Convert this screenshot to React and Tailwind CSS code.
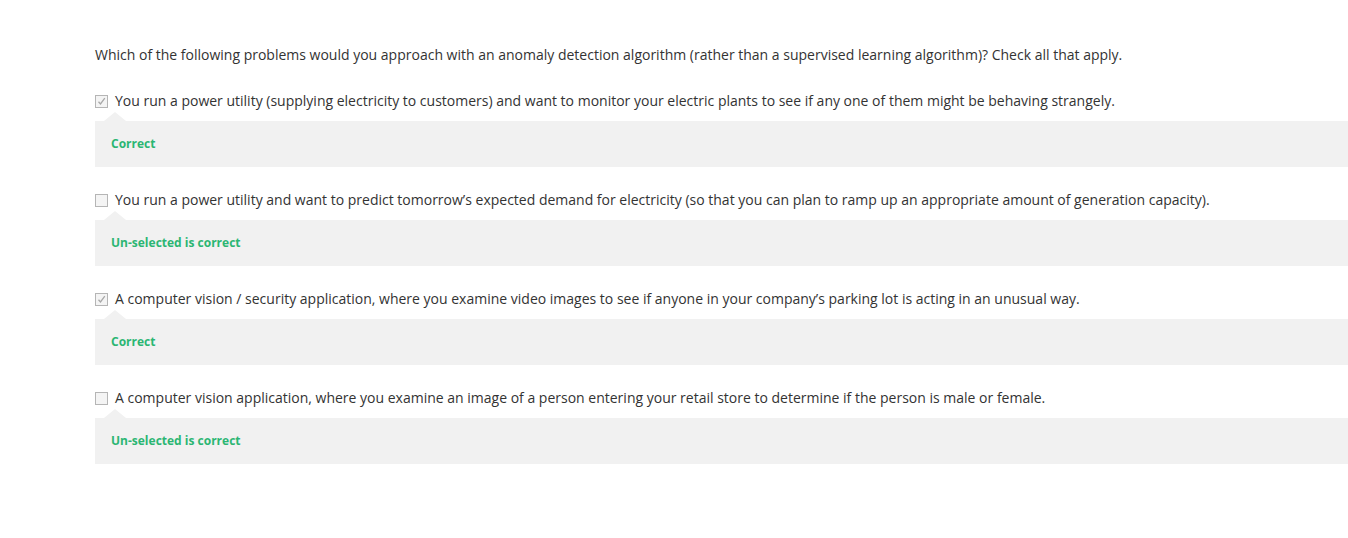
import React from "react";

const options = [
  {
    text: "You run a power utility (supplying electricity to customers) and want to monitor your electric plants to see if any one of them might be behaving strangely.",
    checked: true,
    feedback: "Correct",
  },
  {
    text: "You run a power utility and want to predict tomorrow’s expected demand for electricity (so that you can plan to ramp up an appropriate amount of generation capacity).",
    checked: false,
    feedback: "Un-selected is correct",
  },
  {
    text: "A computer vision / security application, where you examine video images to see if anyone in your company’s parking lot is acting in an unusual way.",
    checked: true,
    feedback: "Correct",
  },
  {
    text: "A computer vision application, where you examine an image of a person entering your retail store to determine if the person is male or female.",
    checked: false,
    feedback: "Un-selected is correct",
  },
];

const Checkbox = ({ checked }) => (
  <span className="w-[13px] h-[13px] border border-[#b5b5b5] bg-[#f4f4f4] flex items-center justify-center shrink-0">
    {checked && (
      <svg width="9" height="9" viewBox="0 0 9 9">
        <path d="M1.5 4.8 L3.5 7 L7.8 1.2" stroke="#a8a8a8" strokeWidth="1.3" fill="none" />
      </svg>
    )}
  </span>
);

export default function App() {
  return (
    <div
      className="bg-white min-h-[538px] pl-[95px] pt-[45px] text-[#333] text-[14px]"
      style={{ fontFamily: "'Open Sans', sans-serif" }}
    >
      <p className="leading-[20px]">
        Which of the following problems would you approach with an anomaly detection algorithm (rather than a supervised learning algorithm)? Check all that apply.
      </p>
      <div className="mt-[26px] flex flex-col gap-[23px]">
        {options.map((o, i) => (
          <div key={i}>
            <label className="flex items-center gap-[7px] leading-[20px]">
              <Checkbox checked={o.checked} />
              <span>{o.text}</span>
            </label>
            <div className="relative mt-[10px] bg-[#f1f1f1] h-[46px] flex items-center pl-[16px]">
              <span className="absolute left-[9px] -top-[9px] w-0 h-0 border-l-[11px] border-r-[11px] border-b-[9px] border-l-transparent border-r-transparent border-b-[#f1f1f1]" />
              <span className="text-[12px] font-bold text-[#2bb673]">{o.feedback}</span>
            </div>
          </div>
        ))}
      </div>
    </div>
  );
}
